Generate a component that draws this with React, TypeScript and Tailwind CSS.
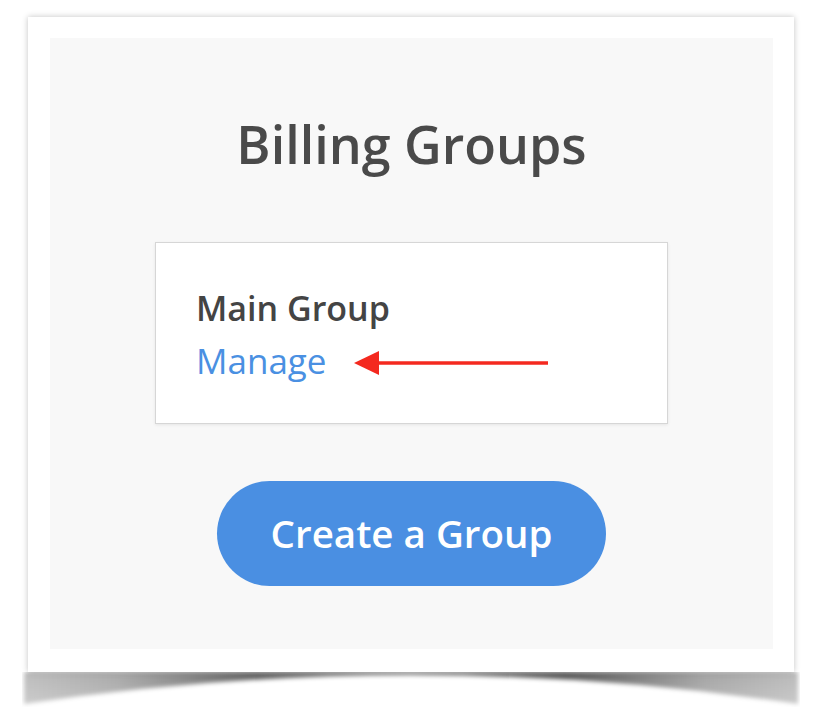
import React from "react";

const font = { fontFamily: '"Open Sans", "Noto Sans", sans-serif' };

function CurlShadow() {
  // curved "lifted paper" shadow under the frame
  return (
    <svg
      className="pointer-events-none absolute left-[-6px] top-full"
      width="778"
      height="42"
      viewBox="0 0 778 42"
    >
      <defs>
        <linearGradient id="shade" x1="0" y1="0" x2="1" y2="0">
          <stop offset="0" stopColor="#000" stopOpacity="0.26" />
          <stop offset="0.12" stopColor="#000" stopOpacity="0.34" />
          <stop offset="0.3" stopColor="#000" stopOpacity="0.62" />
          <stop offset="0.5" stopColor="#000" stopOpacity="0.5" />
          <stop offset="0.7" stopColor="#000" stopOpacity="0.66" />
          <stop offset="0.88" stopColor="#000" stopOpacity="0.36" />
          <stop offset="1" stopColor="#000" stopOpacity="0.27" />
        </linearGradient>
        <linearGradient id="fade" x1="0" y1="0" x2="0" y2="1">
          <stop offset="0" stopColor="#fff" stopOpacity="1" />
          <stop offset="1" stopColor="#fff" stopOpacity="0.7" />
        </linearGradient>
        <mask id="fadeMask">
          <rect x="0" y="0" width="778" height="42" fill="url(#fade)" />
        </mask>
        <filter id="soft" x="-5%" y="-50%" width="110%" height="200%">
          <feGaussianBlur stdDeviation="2" />
        </filter>
      </defs>
      <g mask="url(#fadeMask)">
        <path d="M2 0 H776 V32 Q389 -26 2 32 Z" fill="url(#shade)" filter="url(#soft)" />
      </g>
    </svg>
  );
}

function RedArrow() {
  return (
    <svg width="196" height="26" viewBox="0 0 196 26" className="mt-[5px] shrink-0">
      <line x1="22" y1="13" x2="194" y2="13" stroke="#f4291f" strokeWidth="3.5" />
      <polygon points="0,13 25,1 25,25" fill="#f4291f" />
    </svg>
  );
}

export default function App() {
  return (
    <div className="min-h-[724px] w-[826px] bg-white" style={font}>
      <div className="pt-[17px] pl-[28px]">
        <div className="relative h-[655px] w-[766px] bg-white pt-[21px] pr-[21px] pb-[23px] pl-[22px] shadow-[0_0_6px_rgba(0,0,0,0.24)]">
          <CurlShadow />
          <div className="flex h-full flex-col items-center bg-[#f8f8f8] pt-[80px]">
            <h1 className="text-[52px] font-semibold leading-none text-[#4a4a4a]">Billing Groups</h1>

            <div className="mt-[72px] h-[182px] w-[513px] border border-[#d6d6d6] bg-white pt-[48px] pl-[40px] shadow-[0_1px_3px_rgba(0,0,0,0.08)]">
              <div className="text-[34px] font-semibold leading-none text-[#444444]">Main Group</div>
              <div className="mt-[18px] flex items-center gap-[27px]">
                <a className="text-[35px] leading-none text-[#4a90e2]">Manage</a>
                <RedArrow />
              </div>
            </div>

            <button className="mt-[57px] flex h-[105px] w-[389px] items-center justify-center rounded-full bg-[#4a8fe2] text-[38.5px] font-semibold leading-none text-white">
              Create a Group
            </button>
          </div>
        </div>
      </div>
    </div>
  );
}
